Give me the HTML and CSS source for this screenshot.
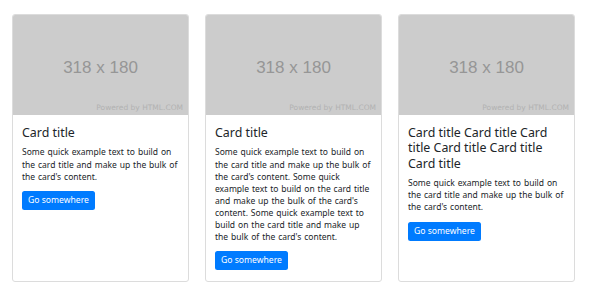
FILE: index.html
```html
<!DOCTYPE html>
<html>
<head>
  <link rel="stylesheet" href="styles.css">
</head>
<body>
  <div class="cards">
    <div class="card">
      <div class="card-img">
        <span class="img-size">318 x 180</span>
        <span class="img-credit">Powered by HTML.COM</span>
      </div>
      <div class="card-body">
        <h5 class="card-title">Card title</h5>
        <p class="card-text">Some quick example text to build on the card title and make up the bulk of the card's content.</p>
        <a href="#" class="btn">Go somewhere</a>
      </div>
    </div>
    <div class="card">
      <div class="card-img">
        <span class="img-size">318 x 180</span>
        <span class="img-credit">Powered by HTML.COM</span>
      </div>
      <div class="card-body">
        <h5 class="card-title">Card title</h5>
        <p class="card-text">Some quick example text to build on the card title and make up the bulk of the card's content. Some quick example text to build on the card title and make up the bulk of the card's content. Some quick example text to build on the card title and make up the bulk of the card's content.</p>
        <a href="#" class="btn">Go somewhere</a>
      </div>
    </div>
    <div class="card">
      <div class="card-img">
        <span class="img-size">318 x 180</span>
        <span class="img-credit">Powered by HTML.COM</span>
      </div>
      <div class="card-body">
        <h5 class="card-title">Card title Card title Card title Card title Card title Card title</h5>
        <p class="card-text">Some quick example text to build on the card title and make up the bulk of the card's content.</p>
        <a href="#" class="btn">Go somewhere</a>
      </div>
    </div>
  </div>
</body>
</html>
```

FILE: styles.css
```css
* {
  margin: 0;
  padding: 0;
  box-sizing: border-box;
}

body {
  background: #fff;
  font-family: "Noto Sans", "Open Sans", sans-serif;
  color: #212529;
}

.cards {
  display: flex;
  align-items: stretch;
  gap: 16px;
  padding: 14px 0 0 12px;
}

.card {
  width: 177px;
  border: 1px solid #dcdcdc;
  border-radius: 3px;
  overflow: hidden;
  background: #fff;
  display: flex;
  flex-direction: column;
}

.card-img {
  position: relative;
  height: 100px;
  background: #cccccc;
  display: flex;
  align-items: center;
  justify-content: center;
}

.img-size {
  font-family: "Liberation Sans", Arial, sans-serif;
  font-size: 17px;
  color: #969696;
  padding-top: 5px;
}

.img-credit {
  position: absolute;
  right: 5px;
  bottom: 3px;
  font-family: "DejaVu Sans", sans-serif;
  font-size: 7.5px;
  color: #b2b2b2;
}

.card-body {
  padding: 10px 8px 11px 9px;
}

.card-title {
  font-size: 12.4px;
  font-weight: 400;
  line-height: 15.4px;
  margin-bottom: 6px;
}

.card-text {
  font-size: 8.5px;
  word-spacing: 0.7px;
  line-height: 12.1px;
  margin-bottom: 8px;
}

.btn {
  display: block;
  width: max-content;
  background: #007bff;
  color: #fff;
  text-decoration: none;
  font-size: 8.6px;
  line-height: 19px;
  height: 19px;
  padding: 0 6px;
  border-radius: 2.5px;
}
```
